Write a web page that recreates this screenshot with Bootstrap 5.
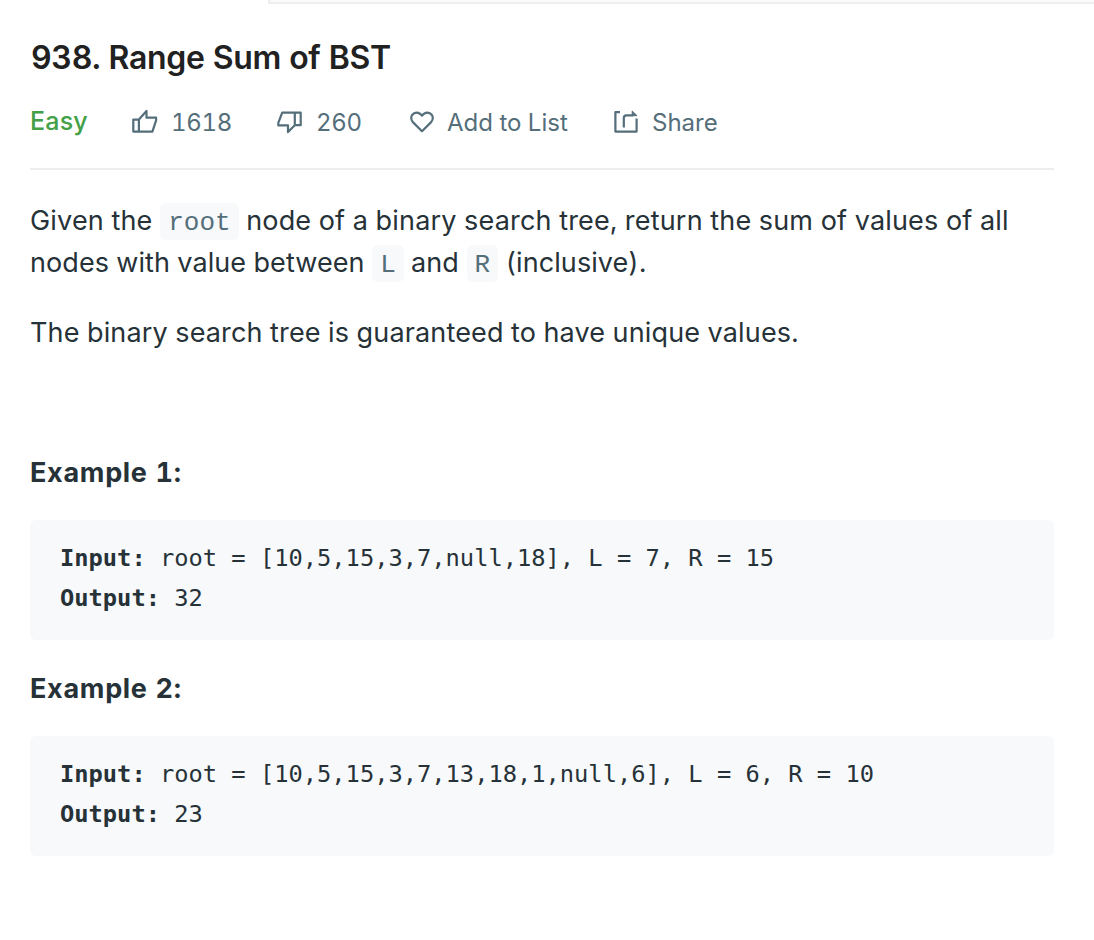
<!DOCTYPE html>
<html lang="en">
<head>
<meta charset="utf-8">
<meta name="viewport" content="width=device-width, initial-scale=1">
<title>938. Range Sum of BST</title>
<link href="https://cdn.jsdelivr.net/npm/bootstrap@5.3.0/dist/css/bootstrap.min.css" rel="stylesheet">
<style>
body{font-family:Inter,"Liberation Sans",sans-serif;font-feature-settings:"tnum";color:#263238;background:#fff;overflow:hidden}
.tab-strip{height:4px;margin-left:268px;background:#fafafa;border-left:2px solid #eee;border-bottom:2px solid #eee}
.problem{padding:30px 40px 0 30px}
.problem-title{font-size:32px;line-height:48px;font-weight:600;color:#212121;letter-spacing:-.34px;padding-left:1px}
.meta-row{height:88px;border-bottom:2px solid #eee;color:#546e7a;font-size:24px;line-height:36px;padding-top:23px}
.meta-row svg{display:block;flex:none;fill:none;stroke:#546e7a;stroke-width:2.2;stroke-linejoin:round}
.easy{color:#43a047;font-weight:500;width:102px;font-size:25px;letter-spacing:.2px;margin-top:-2px}
.vote-count{letter-spacing:-.3px;margin-left:-1px}
.vote-up{width:145px}
.vote-down{width:132px}
.add-list{width:203px}
.statement{font-size:27px;line-height:42px;letter-spacing:.15px;padding-top:30px}
.statement p{margin:0 0 28px;white-space:nowrap}
.statement code{font:26px/34px "Liberation Mono",monospace;font-size:26px;letter-spacing:0;color:#546e7a;background:#f7f9fa;padding:5px 8px 2px;border-radius:6px;margin-left:.3px}
.statement .line-one{letter-spacing:.19px}
.statement .line-two{letter-spacing:.07px}
.statement .heading{font-weight:700;letter-spacing:.7px;margin-bottom:26px}
.statement .sample{font:23.72px/40px "DejaVu Sans Mono",monospace;letter-spacing:0;color:#263238;background:#f7f9fb;border-radius:6px;height:120px;padding:18px 30px;margin:0 0 28px}
</style>
</head>
<body>
<div class="tab-strip"></div>
<main class="problem">
  <h1 class="problem-title mb-0"><span>938. Range Sum of BST</span></h1>
  <div class="meta-row d-flex align-items-start">
    <span class="easy">Easy</span>
    <span class="vote-up d-flex"><svg width="40" height="36" viewBox="132 105 40 36"><path d="M133.3 119.6h5.6v12h-5.6zM138.9 119.6l7.6-8.6v6.7h9.6v2.6l-3.7 11.3h-13.5"/></svg><span class="vote-count">1618</span></span>
    <span class="vote-down d-flex"><svg width="40" height="36" viewBox="277 105 40 36"><path d="M294.8 112.6h5.9v12.6h-5.9M294.8 125.2l-6.8 6.9v-6.7h-9.7v-2.6l3.9-10.2h12.6z"/></svg><span class="vote-count">260</span></span>
    <span class="add-list d-flex"><svg width="38" height="36" viewBox="409 105 38 36"><path d="M422 131.2l-8.9-8.8c-3-3-2.3-7.2.7-8.9 3-1.6 6.2-.5 8.2 2.2 2-2.7 5.2-3.8 8.2-2.2 3 1.7 3.7 5.9.7 8.9z"/></svg><span>Add to List</span></span>
    <span class="d-flex"><svg width="40" height="36" viewBox="612 105 40 36"><path d="M620 112.2h-4.6v19.4h21.2v-13M623.8 127.6v-9.6q0-2.6 2.6-2.6h6.7"/><path d="M632.2 111l4.8 4.7h-4.8z" fill="#546e7a" stroke-width="1"/></svg><span>Share</span></span>
  </div>
  <div class="statement">
    <p><span class="line-one">Given the <code>root</code> node of a binary search tree, return the sum of values of all</span><br><span class="line-two">nodes with value between <code>L</code> and <code>R</code> (inclusive).</span></p>
    <p>The binary search tree is guaranteed to have unique values.</p>
    <p>&nbsp;</p>
    <p class="heading">Example 1:</p>
    <pre class="sample"><strong>Input:</strong> root = [10,5,15,3,7,null,18], L = 7, R = 15
<strong>Output:</strong> 32</pre>
    <p class="heading">Example 2:</p>
    <pre class="sample"><strong>Input:</strong> root = [10,5,15,3,7,13,18,1,null,6], L = 6, R = 10
<strong>Output:</strong> 23</pre>
  </div>
</main>
<script src="https://cdn.jsdelivr.net/npm/bootstrap@5.3.0/dist/js/bootstrap.bundle.min.js"></script>
</body>
</html>
